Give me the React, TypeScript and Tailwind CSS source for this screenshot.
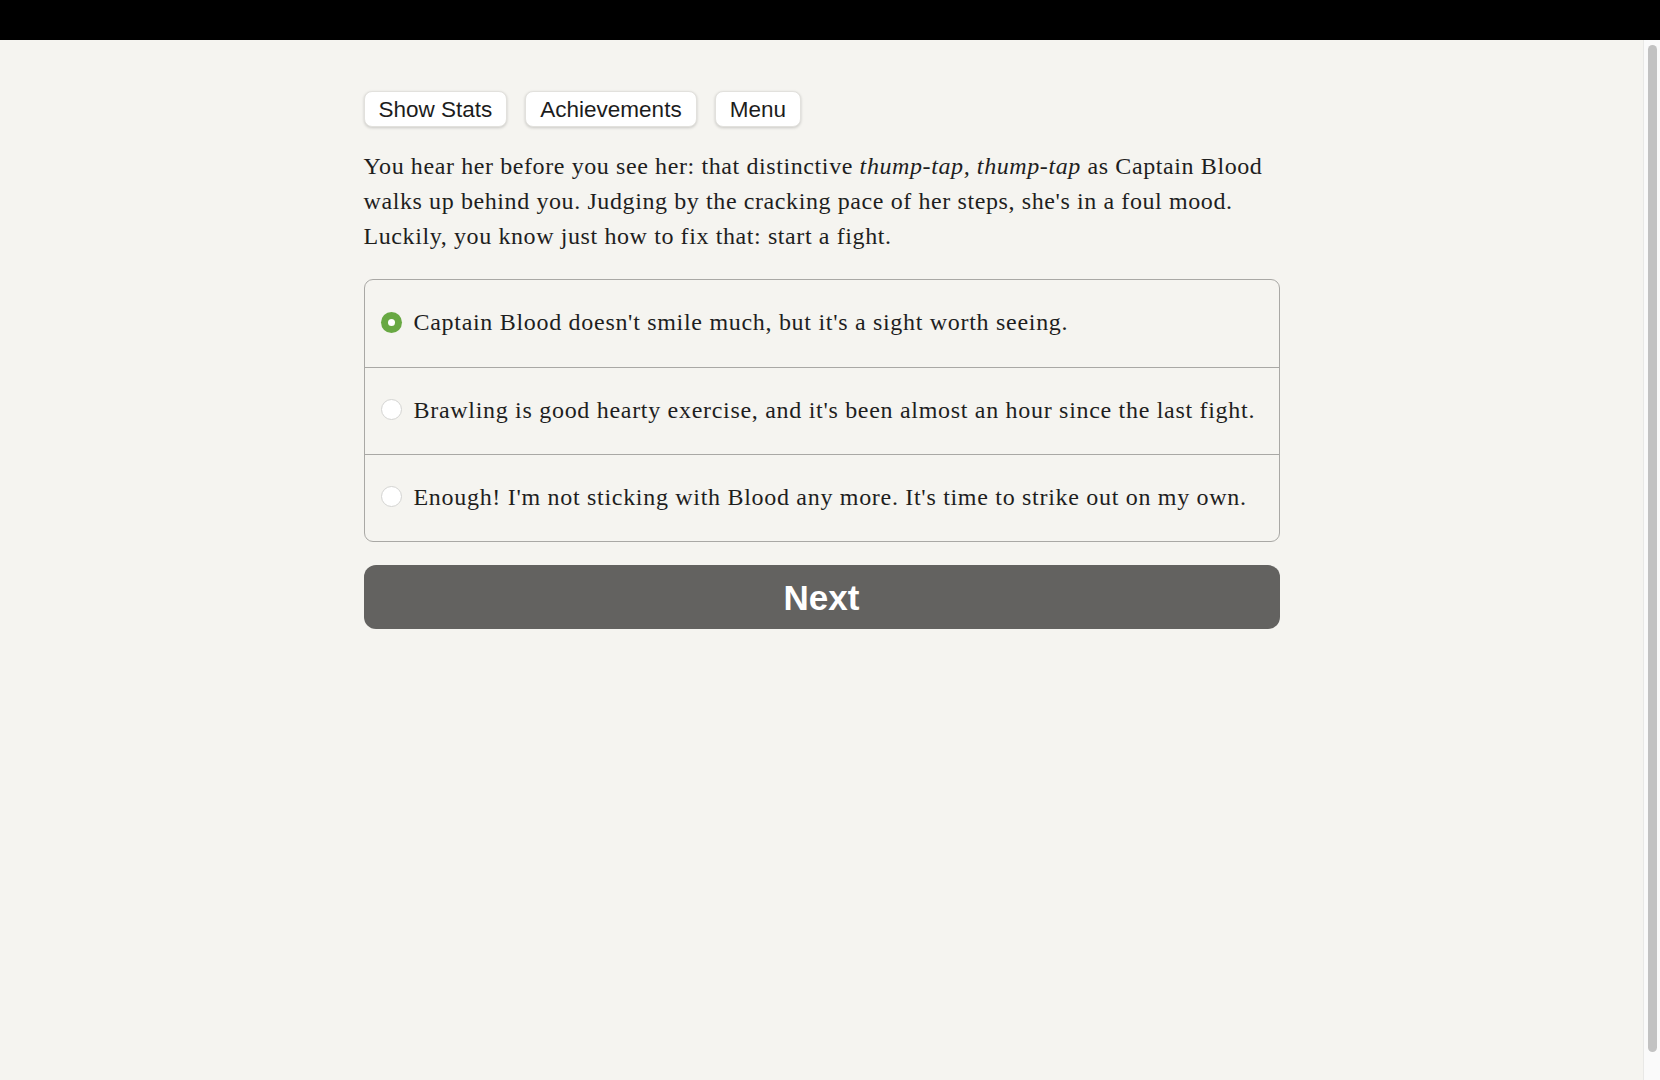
import React, { useState } from "react";

const options = [
  "Captain Blood doesn't smile much, but it's a sight worth seeing.",
  "Brawling is good hearty exercise, and it's been almost an hour since the last fight.",
  "Enough! I'm not sticking with Blood any more. It's time to strike out on my own.",
];

function Radio({ checked }: { checked: boolean }) {
  return checked ? (
    <span className="flex h-[21px] w-[21px] shrink-0 items-center justify-center rounded-full bg-[#68a843]">
      <span className="h-[7px] w-[7px] rounded-full bg-white" />
    </span>
  ) : (
    <span className="h-[21px] w-[21px] shrink-0 rounded-full border border-[#d4d4d2] bg-white" />
  );
}

export default function App() {
  const [sel, setSel] = useState(0);
  const serif = { fontFamily: '"Liberation Serif", "Times New Roman", serif' };
  return (
    <div className="flex h-[1080px] flex-col overflow-hidden bg-[#f5f4f0]">
      <div className="h-[40px] shrink-0 bg-black" />
      <div className="flex min-h-0 flex-1">
        <main className="flex-1">
          <div className="mx-auto w-[916px] pt-[51px]">
            <div
              className="flex gap-[18px]"
              style={{ fontFamily: '"Liberation Sans", Arial, sans-serif' }}
            >
              {["Show Stats", "Achievements", "Menu"].map((b) => (
                <button
                  key={b}
                  className="h-[36px] rounded-[8px] border border-[#e2e1dd] bg-white px-[14px] pt-[2px] text-[22.5px] leading-none text-[#1c1c1c] shadow-[0_1px_3px_rgba(0,0,0,0.18)]"
                >
                  {b}
                </button>
              ))}
            </div>
            <p
              className="mt-[22px] text-[24px] leading-[35px] tracking-[0.6px] text-[#1e1e1e]"
              style={serif}
            >
              You hear her before you see her: that distinctive{" "}
              <i>thump-tap, thump-tap</i> as Captain Blood walks up behind you.
              Judging by the cracking pace of her steps, she's in a foul mood.
              Luckily, you know just how to fix that: start a fight.
            </p>
            <div className="mt-[25px] overflow-hidden rounded-[9px] border border-[#a9a8a5]">
              {options.map((o, i) => (
                <label
                  key={i}
                  onClick={() => setSel(i)}
                  className={`flex h-[87px] cursor-pointer items-center gap-[12px] px-[16px] pb-[3px] ${
                    i > 0 ? "border-t border-[#a9a8a5]" : ""
                  }`}
                >
                  <Radio checked={sel === i} />
                  <span
                    className="whitespace-nowrap text-[24px] tracking-[0.7px] text-[#1e1e1e]"
                    style={serif}
                  >
                    {o}
                  </span>
                </label>
              ))}
            </div>
            <button
              className="mt-[23px] flex h-[64px] w-full items-center justify-center rounded-[12px] bg-[#636260] pt-[2px] text-[35px] font-bold text-white"
              style={{ fontFamily: '"Liberation Sans", Arial, sans-serif' }}
            >
              Next
            </button>
          </div>
        </main>
        <div className="flex w-[17px] shrink-0 justify-center border-l border-[#e8e8e6] bg-[#fafafa] pb-[28px] pt-[5px]">
          <div className="w-[9px] rounded-full bg-[#c2c2c2]" />
        </div>
      </div>
    </div>
  );
}
